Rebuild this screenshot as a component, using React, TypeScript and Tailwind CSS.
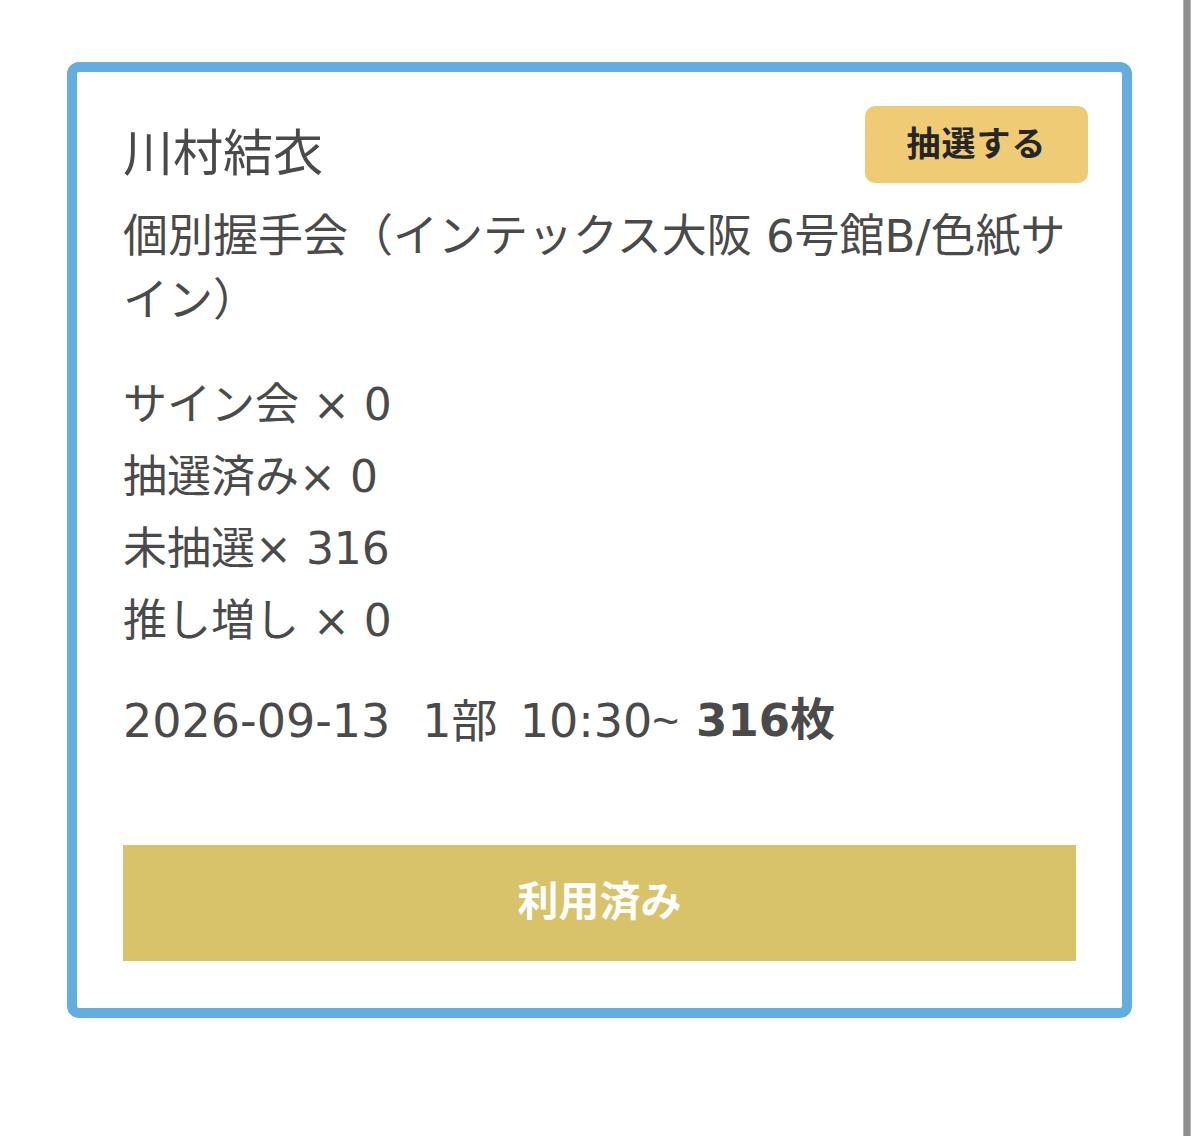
import React from 'react';

const jp = { fontFamily: '"DejaVu Sans", "Noto Sans CJK JP", sans-serif' };

interface TicketStat {
  label: string;
  count: number;
}

const stats: TicketStat[] = [
  { label: 'サイン会 ×', count: 0 },
  { label: '抽選済み×', count: 0 },
  { label: '未抽選×', count: 316 },
  { label: '推し増し ×', count: 0 },
];

const App: React.FC = () => {
  return (
    <div className="w-[1200px] h-[1136px] bg-white flex" style={jp}>
      <div className="pl-[67px] pt-[62px]">
        <div className="w-[1065px] h-[956px] border-[10px] border-[#63aedf] rounded-[12px] px-[46px] pt-[34px] text-[#4a4a4a]">
          <header className="flex items-start justify-between">
            <h1 className="mt-[18px] text-[50px] leading-[60px] font-normal">川村結衣</h1>
            <button className="-mr-[12px] w-[223px] h-[77px] rounded-[10px] bg-[#f0cb76] text-[#262626] text-[34px] font-bold tracking-[1px]">
              抽選する
            </button>
          </header>

          <p className="mt-[21px] text-[45px] leading-[64px]">
            個別握手会（インテックス大阪 6号館B/色紙サイン）
          </p>

          <ul className="mt-[36px]">
            {stats.map((s) => (
              <li key={s.label} className="text-[44px] leading-[72px]">
                {s.label} {s.count}
              </li>
            ))}
          </ul>

          <p className="mt-[32px] text-[46px] leading-[64px] flex items-center">
            <span className="mr-[32px]">2026-09-13</span>
            <span className="mr-[22px]">1部</span>
            <span className="mr-[17px]">
              10:30<span className="font-['Liberation_Sans',sans-serif]">~</span>
            </span>
            <span className="font-bold text-[45px]">316枚</span>
          </p>

          <button className="mt-[92px] w-full h-[116px] bg-[#d8c36b] text-white text-[41px] font-bold">
            利用済み
          </button>
        </div>
      </div>

      <div className="ml-[51px] w-[8px] h-full bg-[#8f8f8f] border-x border-[#b5b5b5]" />
    </div>
  );
};

export default App;
